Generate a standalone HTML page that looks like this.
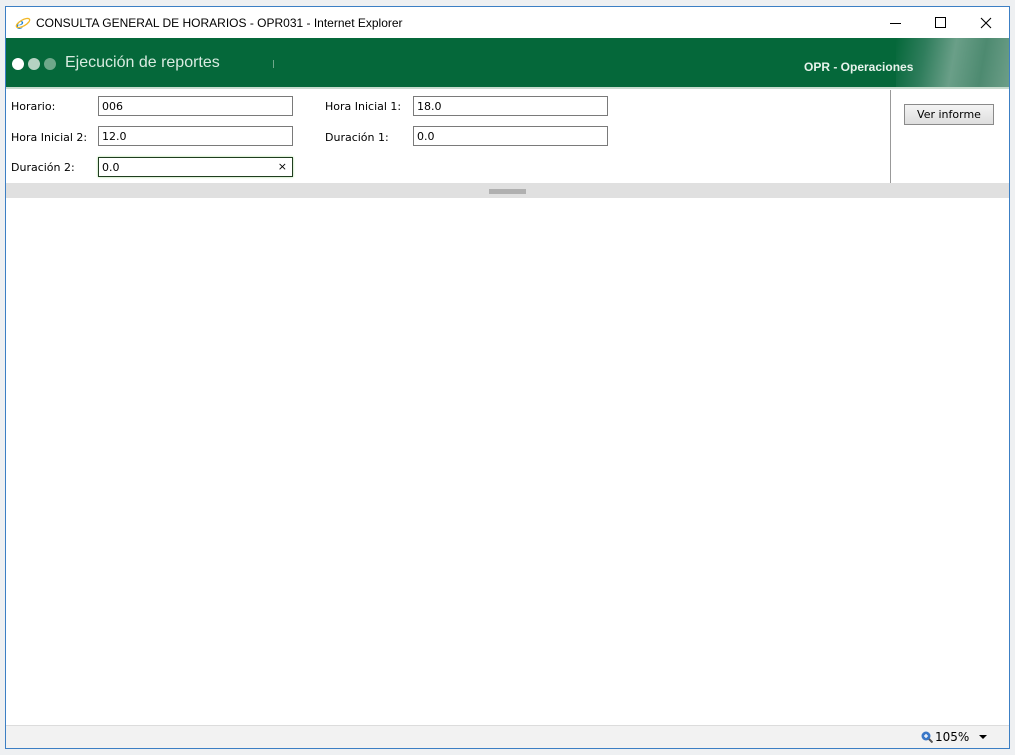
<!DOCTYPE html>
<html><head><style>
*{margin:0;padding:0;box-sizing:border-box}
body{width:1015px;height:755px;background:#eef0f2;position:relative;overflow:hidden;font-family:"Liberation Sans",sans-serif}
#win{position:absolute;left:5px;top:6px;width:1005px;height:743px;border:1px solid #3c7fc4;background:#fff}
#title{position:absolute;left:0;top:0;width:1003px;height:31px;background:#fff;font-size:12px;color:#000}
#title .t{position:absolute;left:30px;top:9px}
#hdr{position:absolute;left:0;top:31px;width:1003px;height:51px;background:#05683a;border-bottom:2px solid #c8dccf}
.lbl{position:absolute;font-family:"DejaVu Sans",sans-serif;font-size:11px;color:#000}
.inp{position:absolute;width:195px;height:20px;border:1px solid #7a7a7a;background:#fff;font-family:"DejaVu Sans",sans-serif;font-size:11px;padding:3px 0 0 3px}
</style></head><body>
<div id="win">
<div id="title">
<svg style="position:absolute;left:9px;top:8px" width="16" height="16" viewBox="0 0 16 16"><text x="1" y="14" font-size="17" font-family="Liberation Serif" font-style="italic" fill="#1a7fd6">e</text><ellipse cx="8" cy="8" rx="7.5" ry="3" fill="none" stroke="#f2b827" stroke-width="1.3" transform="rotate(-30 8 8)"/></svg>
<span class="t">CONSULTA GENERAL DE HORARIOS - OPR031 - Internet Explorer</span>
<div style="position:absolute;left:884px;top:16px;width:11px;height:1px;background:#000"></div>
<div style="position:absolute;left:929px;top:10px;width:11px;height:11px;border:1px solid #000"></div>
<svg style="position:absolute;left:974px;top:10px" width="12" height="12"><path d="M1 1L11 11M11 1L1 11" stroke="#000" stroke-width="1.1"/></svg>
</div>
<div id="hdr">
<div style="position:absolute;left:6px;top:20px;width:12px;height:12px;border-radius:6px;background:#fff"></div>
<div style="position:absolute;left:22px;top:20px;width:12px;height:12px;border-radius:6px;background:#b6d2c2"></div>
<div style="position:absolute;left:38px;top:20px;width:12px;height:12px;border-radius:6px;background:#6ea88a"></div>
<div style="position:absolute;left:59px;top:16px;font-size:16px;color:#d8ebe0">Ejecución de reportes</div>
<div style="position:absolute;left:267px;top:22px;width:1px;height:8px;background:#6ea88a"></div>
<div style="position:absolute;left:890px;top:0;width:113px;height:49px;background:linear-gradient(100deg,#05683a,#2f7d5c 25%,#6a9f88 50%,#4d8a70 75%,#6c9e88)"></div>
<div style="position:absolute;left:798px;top:22px;font-size:12px;font-weight:bold;color:#e8f3ec">OPR - Operaciones</div>
</div>
<div class="lbl" style="left:5px;top:93px">Horario:</div>
<div class="inp" style="left:92px;top:89px">006</div>
<div class="lbl" style="left:319px;top:93px">Hora Inicial 1:</div>
<div class="inp" style="left:407px;top:89px">18.0</div>
<div class="lbl" style="left:5px;top:124px">Hora Inicial 2:</div>
<div class="inp" style="left:92px;top:119px">12.0</div>
<div class="lbl" style="left:319px;top:124px">Duración 1:</div>
<div class="inp" style="left:407px;top:119px">0.0</div>
<div class="lbl" style="left:5px;top:154px">Duración 2:</div>
<div class="inp" style="left:92px;top:150px;border-color:#1f3d1f;box-shadow:0 0 2px #9fd88f">0.0<span style="position:absolute;right:5px;top:2px;font-size:11px">×</span></div>
<div style="position:absolute;left:884px;top:83px;width:1px;height:93px;background:#999"></div>
<div style="position:absolute;left:898px;top:97px;width:90px;height:21px;border:1px solid #8a8a8a;background:linear-gradient(#f4f4f4,#dedede);font-family:'DejaVu Sans',sans-serif;font-size:11px;text-align:center;line-height:19px">Ver informe</div>
<div style="position:absolute;left:0;top:176px;width:1003px;height:15px;background:#e0e0e0"></div>
<div style="position:absolute;left:483px;top:182px;width:37px;height:5px;background:#b0b0b0"></div>
<div style="position:absolute;left:0;top:718px;width:1003px;height:23px;background:#f2f2f2;border-top:1px solid #dcdcdc"></div>
<svg style="position:absolute;left:915px;top:724px" width="12" height="12"><circle cx="5" cy="5" r="4.5" fill="#3a78c8"/><path d="M3 5h4M5 3v4" stroke="#fff" stroke-width="1.3"/><path d="M8 8l3.5 3.5" stroke="#555" stroke-width="2"/></svg>
<div style="position:absolute;left:929px;top:723px;font-size:12px;font-family:'DejaVu Sans',sans-serif">105%</div>
<div style="position:absolute;left:973px;top:728px;border-left:4px solid transparent;border-right:4px solid transparent;border-top:4px solid #000"></div>
</div>
</body></html>
